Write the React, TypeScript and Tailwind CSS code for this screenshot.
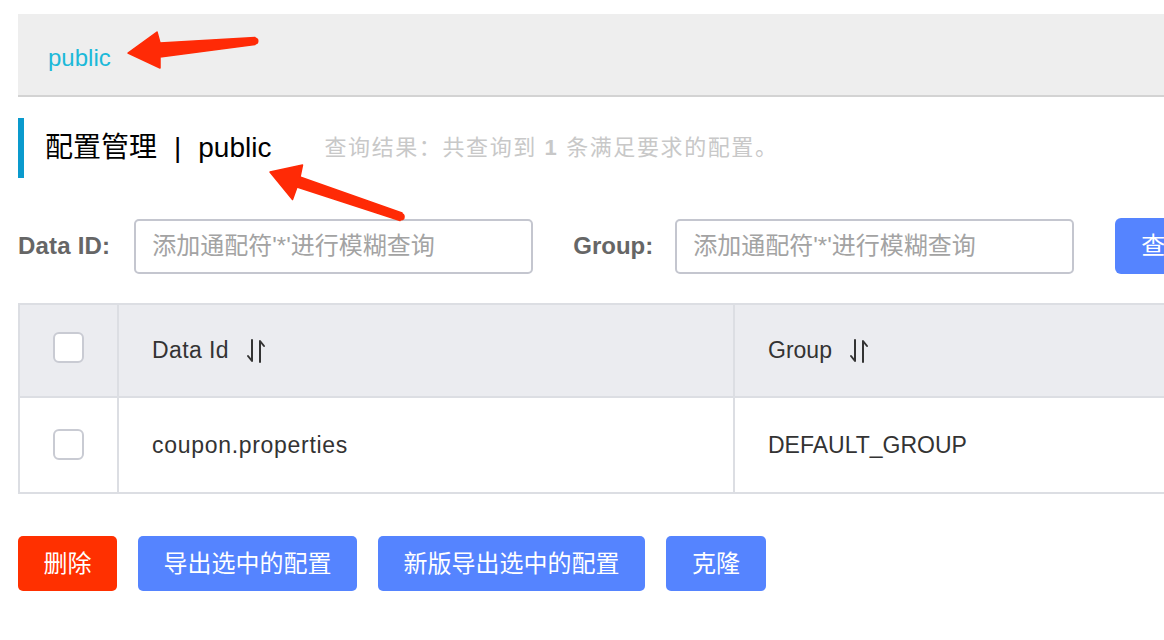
import React from "react";

const SortIcon = () => (
  <svg width="22" height="26" viewBox="0 0 22 26" className="ml-[17px]" fill="none" stroke="#333" strokeWidth="2" strokeLinecap="round" strokeLinejoin="round">
    <path d="M6 2 V23 L2 18" />
    <path d="M14 24 V3 L18 8" />
  </svg>
);

const Checkbox = () => (
  <div className="w-[31px] h-[31px] rounded-[6px] border-2 border-[#c9cbd3] bg-white" />
);

export default function App() {
  return (
    <div className="relative w-[1164px] h-[640px] overflow-hidden bg-white pl-[18px] font-['Liberation_Sans','Noto_Sans_CJK_SC',sans-serif]">
      {/* top bar */}
      <div className="mt-[14px] h-[83px] bg-[#eeeeee] border-b-2 border-[#d3d3d3] flex items-center pl-[30px] pt-[6px]">
        <span className="text-[24px] text-[#1cb9d9] leading-none">public</span>
      </div>

      {/* title */}
      <div className="mt-[21px] flex items-center h-[60px]">
        <div className="w-[6px] h-[60px] bg-[#0a9acd]" />
        <div className="ml-[21px] flex items-center text-[28px] text-black leading-none">
          <span>配置管理</span>
          <span className="mx-[17px]">|</span>
          <span>public</span>
        </div>
        <div className="ml-[53px] text-[22px] tracking-[1.6px] text-[#c8c8c8] leading-none">
          查询结果：共查询到 <span className="font-bold">1</span> 条满足要求的配置。
        </div>
      </div>

      {/* search row */}
      <div className="mt-[40px] flex items-center">
        <span className="shrink-0 text-[24px] font-bold text-[#666] leading-none tracking-[0.2px]">Data ID:</span>
        <div className="shrink-0 ml-[24px] w-[399px] h-[55px] rounded-[5px] border-2 border-[#c4c6cf] flex items-center pl-[16px] text-[24px] text-[#a3a3a3] leading-none">
          添加通配符'*'进行模糊查询
        </div>
        <span className="shrink-0 ml-[40px] text-[24px] font-bold text-[#666] leading-none">Group:</span>
        <div className="shrink-0 ml-[22px] w-[399px] h-[55px] rounded-[5px] border-2 border-[#c4c6cf] flex items-center pl-[16px] text-[24px] text-[#a3a3a3] leading-none">
          添加通配符'*'进行模糊查询
        </div>
        <div className="shrink-0 ml-[41px] w-[90px] h-[56px] rounded-[6px] bg-[#5584ff] flex items-center pl-[26px] text-[24px] text-white leading-none">
          查询
        </div>
      </div>

      {/* table */}
      <div className="mt-[29px] w-[1400px] border-2 border-[#dcdee3] text-[23px] text-[#333]">
        <div className="flex h-[93px] bg-[#ebecf0] border-b-2 border-[#dcdee3]">
          <div className="w-[99px] border-r-2 border-[#dcdee3] flex items-center justify-center pb-[6px]">
            <Checkbox />
          </div>
          <div className="w-[616px] border-r-2 border-[#dcdee3] flex items-center pl-[33px]">
            <span className="tracking-[0.4px]">Data Id</span>
            <SortIcon />
          </div>
          <div className="flex-1 flex items-center pl-[33px]">
            <span>Group</span>
            <SortIcon />
          </div>
        </div>
        <div className="flex h-[94px]">
          <div className="w-[99px] border-r-2 border-[#dcdee3] flex items-center justify-center pb-[2px]">
            <Checkbox />
          </div>
          <div className="w-[616px] border-r-2 border-[#dcdee3] flex items-center pl-[33px] tracking-[0.7px]">
            coupon.properties
          </div>
          <div className="flex-1 flex items-center pl-[33px]">DEFAULT_GROUP</div>
        </div>
      </div>

      {/* buttons */}
      <div className="mt-[42px] flex items-center gap-[21px] text-[24px] text-white leading-none">
        <div className="h-[55px] w-[99px] rounded-[5px] bg-[#ff3000] flex items-center justify-center">删除</div>
        <div className="h-[55px] w-[219px] rounded-[5px] bg-[#5584ff] flex items-center justify-center">导出选中的配置</div>
        <div className="h-[55px] w-[267px] rounded-[5px] bg-[#5584ff] flex items-center justify-center">新版导出选中的配置</div>
        <div className="h-[55px] w-[100px] rounded-[5px] bg-[#5584ff] flex items-center justify-center">克隆</div>
      </div>

      {/* annotation arrows */}
      <svg className="absolute left-0 top-0 pointer-events-none" width="1164" height="640" viewBox="0 0 1164 640">
        <g fill="#ff2a06" stroke="#ff2a06" strokeWidth="1.5" strokeLinejoin="round">
          <polygon points="128,53 157,32 160,43 255,37.5 255,44.5 160,57 160,68" />
          <circle cx="255" cy="41" r="3.5" stroke="none" />
          <polygon points="270,172 302.5,165 300,177 402,213 400,220.5 297,187 292.5,199.5" />
          <circle cx="401" cy="216.7" r="3.8" stroke="none" />
        </g>
      </svg>
    </div>
  );
}
